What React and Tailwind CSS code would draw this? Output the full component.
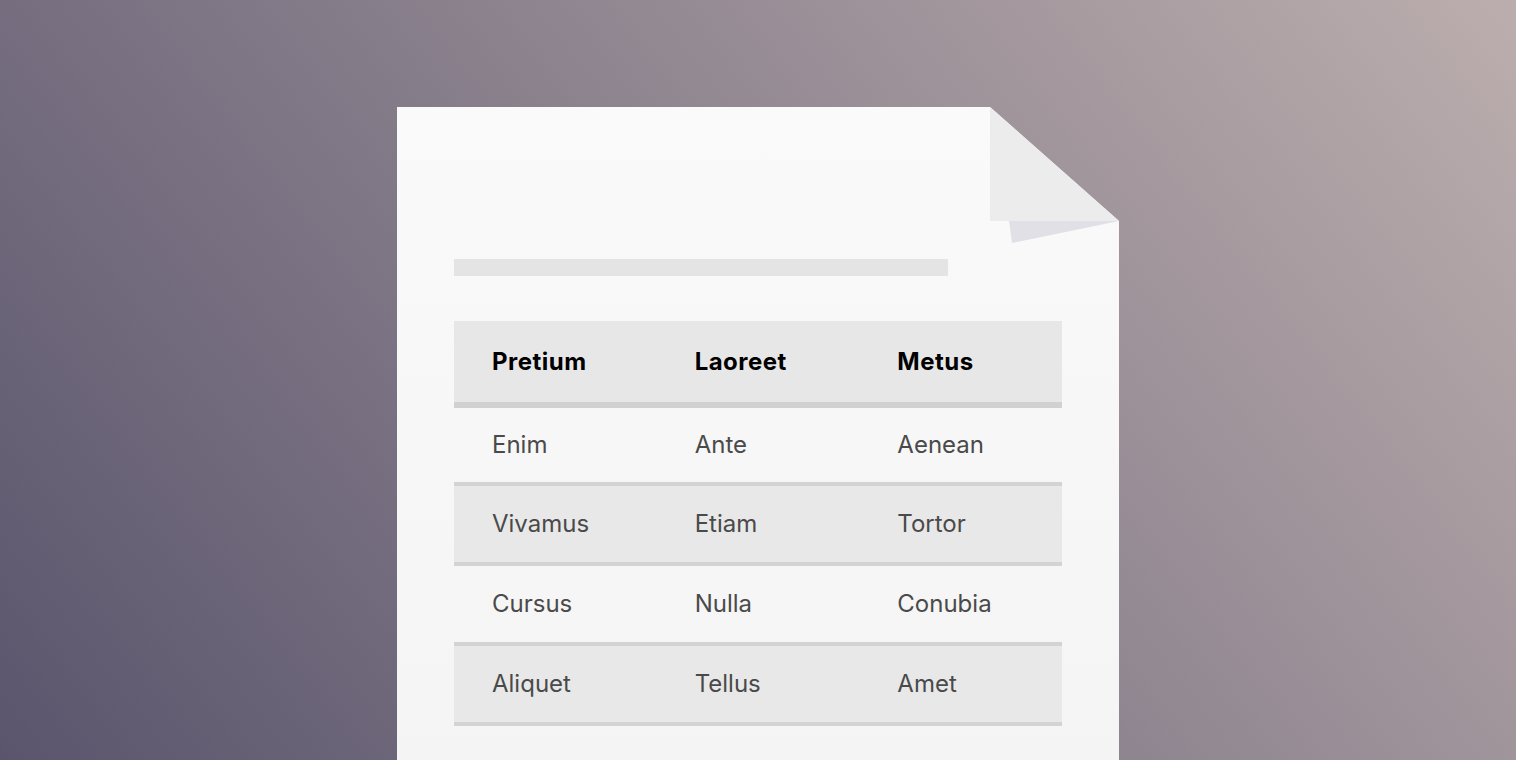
const header = ['Pretium', 'Laoreet', 'Metus']

const rows = [
  { cells: ['Enim', 'Ante', 'Aenean'], shaded: false, h: 'h-[74px]' },
  { cells: ['Vivamus', 'Etiam', 'Tortor'], shaded: true, h: 'h-[76px]' },
  { cells: ['Cursus', 'Nulla', 'Conubia'], shaded: false, h: 'h-[76px]' },
  { cells: ['Aliquet', 'Tellus', 'Amet'], shaded: true, h: 'h-[76px]' },
]

function Fold() {
  return (
    <svg className="absolute top-0 right-0" width="129" height="136" viewBox="0 0 129 136">
      <polygon points="19,114 22,136 129,114" fill="#e1e0e6" />
      <polygon points="0,0 0,114 129,114" fill="#ececec" />
    </svg>
  )
}

export default function App() {
  return (
    <div className="h-[760px] w-full overflow-hidden bg-[linear-gradient(52deg,#5a556d,#bcaeae)] flex justify-center pt-[107px] font-['Inter','Noto_Sans',sans-serif]">
      <div className="relative w-[722px] h-[700px] shrink-0">
        {/* Paper */}
        <div className="h-full w-full bg-[linear-gradient(180deg,#fafafa,#f4f4f4)] [clip-path:polygon(0_0,593px_0,100%_114px,100%_100%,0_100%)] px-[57px] pt-[152px]">
          <div className="h-[17px] w-[494px] bg-[#e4e4e4]" />

          <div className="mt-[45px] w-[608px]">
            <div className="grid grid-cols-3 items-center h-[87px] bg-[#e7e7e7] border-b-[6px] border-[#d1d1d1]">
              {header.map((h) => (
                <div key={h} className="pl-[38px] pt-px text-[24px] font-bold tracking-[0.02em] text-black">{h}</div>
              ))}
            </div>
            {rows.map((r, i) => (
              <div
                key={i}
                className={`grid grid-cols-3 items-center border-b-4 border-[#d3d3d3] box-content ${r.h} ${r.shaded ? 'bg-[#e8e8e8]' : ''}`}
              >
                {r.cells.map((c) => (
                  <div key={c} className="pl-[38px] text-[24px] text-[#4a4a4a]">{c}</div>
                ))}
              </div>
            ))}
          </div>
        </div>
        <Fold />
      </div>
    </div>
  )
}
